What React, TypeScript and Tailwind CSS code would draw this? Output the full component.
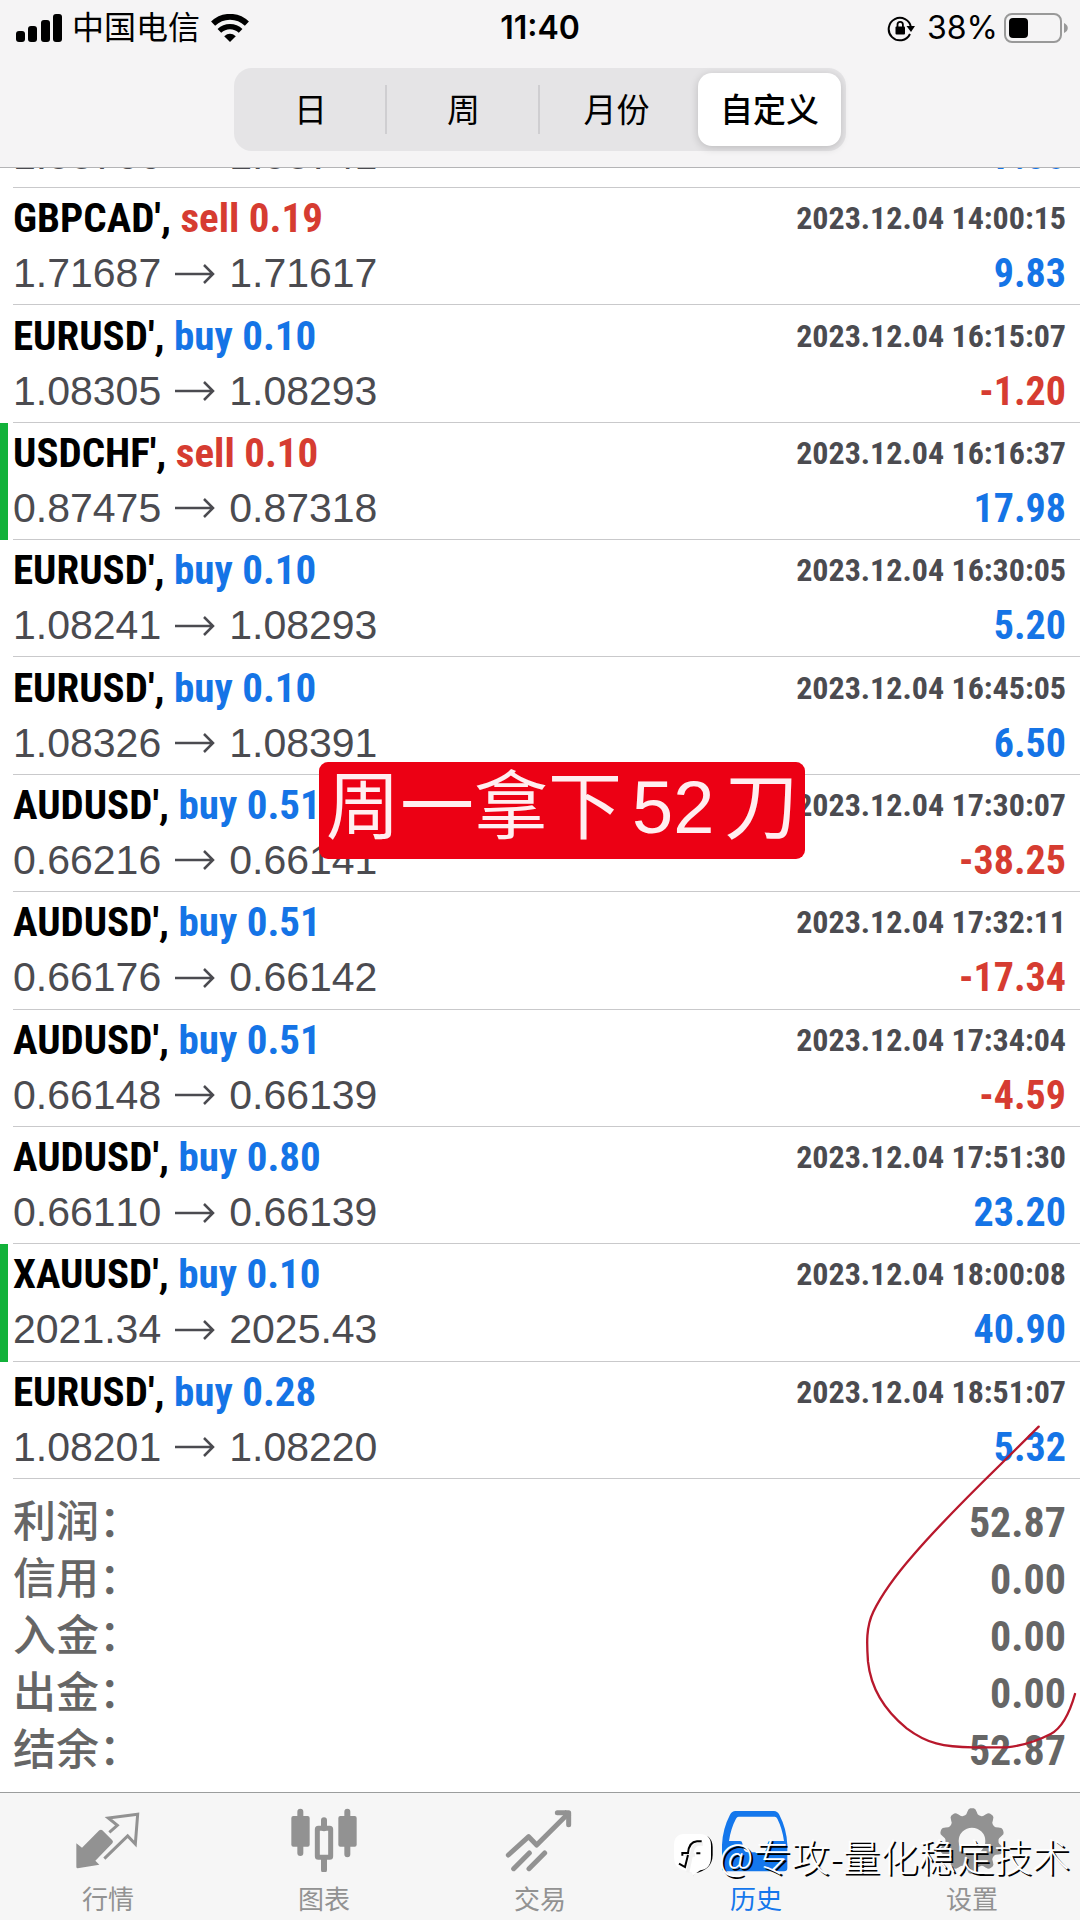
import { useState } from 'react';
import type { ReactNode } from 'react';

type Deal = {
  symbol: string;
  side: 'buy' | 'sell';
  volume: string;
  open: string;
  close: string;
  time: string;
  profit: string;
  marked?: boolean;
};

const DEALS: Deal[] = [
  { symbol: 'GBPCAD', side: 'sell', volume: '0.19', open: '1.71687', close: '1.71617', time: '2023.12.04 14:00:15', profit: '9.83' },
  { symbol: 'EURUSD', side: 'buy', volume: '0.10', open: '1.08305', close: '1.08293', time: '2023.12.04 16:15:07', profit: '-1.20' },
  { symbol: 'USDCHF', side: 'sell', volume: '0.10', open: '0.87475', close: '0.87318', time: '2023.12.04 16:16:37', profit: '17.98', marked: true },
  { symbol: 'EURUSD', side: 'buy', volume: '0.10', open: '1.08241', close: '1.08293', time: '2023.12.04 16:30:05', profit: '5.20' },
  { symbol: 'EURUSD', side: 'buy', volume: '0.10', open: '1.08326', close: '1.08391', time: '2023.12.04 16:45:05', profit: '6.50' },
  { symbol: 'AUDUSD', side: 'buy', volume: '0.51', open: '0.66216', close: '0.66141', time: '2023.12.04 17:30:07', profit: '-38.25' },
  { symbol: 'AUDUSD', side: 'buy', volume: '0.51', open: '0.66176', close: '0.66142', time: '2023.12.04 17:32:11', profit: '-17.34' },
  { symbol: 'AUDUSD', side: 'buy', volume: '0.51', open: '0.66148', close: '0.66139', time: '2023.12.04 17:34:04', profit: '-4.59' },
  { symbol: 'AUDUSD', side: 'buy', volume: '0.80', open: '0.66110', close: '0.66139', time: '2023.12.04 17:51:30', profit: '23.20' },
  { symbol: 'XAUUSD', side: 'buy', volume: '0.10', open: '2021.34', close: '2025.43', time: '2023.12.04 18:00:08', profit: '40.90', marked: true },
  { symbol: 'EURUSD', side: 'buy', volume: '0.28', open: '1.08201', close: '1.08220', time: '2023.12.04 18:51:07', profit: '5.32' },
];

const TOTALS = [
  ['利润', '52.87'],
  ['信用', '0.00'],
  ['入金', '0.00'],
  ['出金', '0.00'],
  ['结余', '52.87'],
];

const PERIODS = ['日', '周', '月份', '自定义'];

// ---------------------------------------------------------------------------
// Status bar icons
// ---------------------------------------------------------------------------

function SignalIcon() {
  return (
    <svg className="h-7 w-[46px]" viewBox="0 0 46 28" fill="currentColor" aria-hidden>
      <rect x="0" y="17" width="9" height="11" rx="3" />
      <rect x="12" y="12" width="9" height="16" rx="3" />
      <rect x="25" y="6" width="9" height="22" rx="3" />
      <rect x="37" y="0" width="9" height="28" rx="3" />
    </svg>
  );
}

function WifiIcon() {
  return (
    <svg className="h-7 w-10" viewBox="0 0 40 29" fill="none" stroke="currentColor" aria-hidden>
      <path d="M2.5 10a25 25 0 0 1 35 0" strokeWidth="6" />
      <path d="M9 17.500a16 16 0 0 1 22 0" strokeWidth="5.5" />
      <path d="M20 29l-6-6q6-5 12 0z" fill="currentColor" stroke="none" />
    </svg>
  );
}

function RotationLockIcon() {
  return (
    <svg className="h-7 w-7" viewBox="0 0 28 28" fill="none" stroke="currentColor" strokeWidth="2" aria-hidden>
      <path d="M23 20a11.200 11.200 0 1 1 1-6.500" />
      <path d="M19.500 12h8.500l-4 6z" fill="currentColor" stroke="none" />
      <rect x="8.500" y="12.500" width="9.500" height="8" rx="1" fill="currentColor" stroke="none" />
      <path d="M10.500 13v-2.500a2.700 2.700 0 0 1 5.400 0V13" strokeWidth="1.800" />
    </svg>
  );
}

function BatteryIcon() {
  return (
    <svg className="h-[30px] w-16" viewBox="0 0 64 30" fill="none" aria-hidden>
      <rect x="1" y="1" width="56" height="28" rx="7" stroke="#999" strokeWidth="2" />
      <rect x="5" y="5" width="19" height="20" rx="4" fill="#000" />
      <path d="M60 10c5 2 5 8 0 10z" fill="#999" />
    </svg>
  );
}

// ---------------------------------------------------------------------------
// Tab bar icons
// ---------------------------------------------------------------------------

function QuotesIcon() {
  return (
    <svg className="h-16 w-18" viewBox="216 84 216 192" fill="none" aria-hidden>
      <path
        d="M229 190l17 13 52-52q5-4 9 0l30 30q4 5 0 9l-51 52 12 12-65 11q-4 0-4-5z"
        fill="currentColor"
      />
      <path d="M328 157l24-21-27-22 88-11-7 89-23-24-70 68" stroke="currentColor" strokeWidth="9" />
    </svg>
  );
}

function ChartIcon() {
  return (
    <svg className="h-16 w-18" viewBox="864 84 216 192" fill="none" stroke="currentColor" aria-hidden>
      <path d="M901 95v124M1042 95v128M972 121v24M972 235v34" strokeWidth="18" strokeLinecap="round" />
      <rect x="874" y="108" width="55" height="92" rx="6" fill="currentColor" stroke="none" />
      <rect x="1015" y="108" width="55" height="92" rx="6" fill="currentColor" stroke="none" />
      <rect x="952" y="145" width="40" height="87" rx="3" strokeWidth="15" />
    </svg>
  );
}

function TradeIcon() {
  return (
    <svg
      className="h-16 w-18"
      viewBox="312 84 216 192"
      fill="none"
      stroke="currentColor"
      strokeWidth="15"
      strokeLinecap="round"
      strokeLinejoin="round"
      aria-hidden
    >
      <path d="M325 225l61-55 24 25 94-94" />
      <path d="M472 98h34v36M497 98l9 9" />
      <path d="M341 266l47-47M387 266l47-47" />
    </svg>
  );
}

function HistoryIcon() {
  return (
    <svg className="h-16 w-18" viewBox="180 84 216 192" fill="currentColor" aria-hidden>
      <path
        fillRule="evenodd"
        d="M226 93h116q10 0 16 11 22 42 24 90v70q0 10-10 10H196q-10 0-10-10v-70q2-48 24-90 6-11 16-11zM236 110q-5 0-8 6-16 30-21 67h33q6 0 7 7 2 27 16 27h44q14 0 16-27 1-7 7-7h42q-5-37-20-67-3-6-8-6z"
        clipRule="evenodd"
      />
    </svg>
  );
}

// Ten soft teeth around a round hole
const GEAR = Array.from({ length: 120 }, (_, i) => {
  const a = (i / 120) * Math.PI * 2;
  const r = 89 + 10 * Math.tanh(1.8 * Math.cos(a * 10));
  return `${(936 + r * Math.sin(a)).toFixed(1)},${(183 - r * Math.cos(a)).toFixed(1)}`;
}).join('L');

function SettingsIcon() {
  return (
    <svg className="h-16 w-18 overflow-visible" viewBox="828 84 216 192" fill="currentColor" aria-hidden>
      <path fillRule="evenodd" d={`M${GEAR}ZM976 183a40 40 0 1 0-80 0a40 40 0 1 0 80 0z`} />
    </svg>
  );
}

const TABS: { label: string; icon: ReactNode }[] = [
  { label: '行情', icon: <QuotesIcon /> },
  { label: '图表', icon: <ChartIcon /> },
  { label: '交易', icon: <TradeIcon /> },
  { label: '历史', icon: <HistoryIcon /> },
  { label: '设置', icon: <SettingsIcon /> },
];

// ---------------------------------------------------------------------------
// Deals
// ---------------------------------------------------------------------------

function Prices({ open, close }: { open: string; close: string }) {
  return (
    <span className="flex items-center gap-3.5 text-[41px] text-[#4b4b50] [font-kerning:none]">
      {open}
      <svg className="h-6 w-10" viewBox="0 0 40 24" fill="none" stroke="currentColor" strokeWidth="2.500" aria-label="→">
        <path d="M0 12h38M29 3l9 9-9 9" />
      </svg>
      {close}
    </span>
  );
}

function DealRow({ deal }: { deal: Deal }) {
  const isLoss = deal.profit.startsWith('-');

  return (
    <li className="flex flex-1">
      <span className={deal.marked ? 'w-2 bg-[#12b23a]' : 'w-2'} />
      <div className="ml-[5px] flex flex-1 flex-col justify-center border-b border-[#c9c9cb] pr-3.5 leading-[55px]">
        <div className="flex items-center justify-between font-['Roboto_Condensed','Liberation_Sans',sans-serif] font-bold">
          <span className="text-[41px] text-black">
            {deal.symbol}',{' '}
            <span className={deal.side === 'buy' ? 'text-[#1574e6]' : 'text-[#d63c31]'}>
              {deal.side} {deal.volume}
            </span>
          </span>
          <time className="text-[32px] text-[#4b4b50]">{deal.time}</time>
        </div>
        <div className="flex items-center justify-between">
          <Prices open={deal.open} close={deal.close} />
          <span
            className={[
              "font-['Roboto_Condensed','Liberation_Sans',sans-serif] text-[40px] font-bold",
              isLoss ? 'text-[#d63c31]' : 'text-[#1574e6]',
            ].join(' ')}
          >
            {deal.profit}
          </span>
        </div>
      </div>
    </li>
  );
}

// ---------------------------------------------------------------------------
// Page
// ---------------------------------------------------------------------------

export default function App() {
  const [period, setPeriod] = useState('自定义');
  const [tab, setTab] = useState('历史');

  return (
    <div className="relative flex min-h-screen flex-col overflow-hidden bg-white font-['Liberation_Sans','Noto_Sans_CJK_SC',sans-serif] text-black">
      <header className="border-b border-[#b4b4b6] bg-[#f5f4f5]">
        <div className="grid h-[54px] grid-cols-3 items-center px-3 pt-0.5 font-['Inter','Noto_Sans_CJK_SC',sans-serif] text-[32px]">
          <div className="flex items-center gap-2.5 pl-1">
            <SignalIcon />
            <span>中国电信</span>
            <WifiIcon />
          </div>
          <span className="text-center font-semibold">11:40</span>
          <div className="flex items-center justify-end">
            <RotationLockIcon />
            <span className="mr-1.5 ml-3">38%</span>
            <BatteryIcon />
          </div>
        </div>

        <div className="mx-auto mt-3.5 mb-4 grid h-[83px] w-[612px] max-w-full grid-cols-4 rounded-[18px] bg-[#e5e4e6]">
          {PERIODS.map((p, i) => (
            <button
              key={p}
              type="button"
              aria-pressed={p === period}
              onClick={() => setPeriod(p)}
              className={[
                'relative pt-0.5 text-[33px]',
                p === period ? 'm-[5px] rounded-[14px] bg-white font-medium shadow-[0_2px_8px_rgba(0,0,0,0.18)]' : '',
              ].join(' ')}
            >
              {p}
              {i < 2 && <span className="absolute top-[17px] right-0 bottom-[17px] w-0.5 bg-[#cfced1]" />}
            </button>
          ))}
        </div>
      </header>

      <main className="flex flex-1 flex-col">
        {/* Tail of the deal scrolled under the header */}
        <div className="ml-[13px] flex h-5 items-end justify-between overflow-hidden border-b border-[#c9c9cb] pr-3.5 pb-1 leading-[55px]">
          <Prices open="1.08766" close="1.08741" />
          <span className="font-['Roboto_Condensed','Liberation_Sans',sans-serif] text-[40px] font-bold text-[#1574e6]">
            7.80
          </span>
        </div>

        <ul className="flex flex-1 flex-col">
          {DEALS.map((d) => (
            <DealRow key={d.time} deal={d} />
          ))}
        </ul>

        <dl className="pt-[15px] pr-3.5 pb-[13px] pl-[13px] leading-[57px] text-[#666]">
          {TOTALS.map(([label, value]) => (
            <div key={label} className="flex justify-between">
              <dt className="text-[43px] font-medium">{label}：</dt>
              <dd className="font-['Roboto_Condensed','Liberation_Sans',sans-serif] text-[42px] font-bold">{value}</dd>
            </div>
          ))}
        </dl>
      </main>

      <nav className="grid grid-cols-5 border-t border-[#9b9d9d] bg-[#f6f6f6]">
        {TABS.map(({ label, icon }) => (
          <button
            key={label}
            type="button"
            onClick={() => setTab(label)}
            className={[
              'flex flex-col items-center gap-3 pt-[15px] pb-1 text-[26px] leading-8',
              label === tab ? 'text-[#1477ec]' : 'text-[#929292]',
            ].join(' ')}
          >
            {icon}
            {label}
          </button>
        ))}
      </nav>

      {/* Caption sticker */}
      <div className="absolute top-[762px] left-[319px] flex h-[97px] items-center gap-2.5 rounded-[9px] bg-[#ec0014] px-[7px] pb-1.5 text-[74px] leading-none text-[#ffeef0]">
        <span>周一拿下</span>
        <span>52</span>
        <span>刀</span>
      </div>

      {/* Hand-drawn loop around the totals */}
      <svg
        className="pointer-events-none absolute right-0 bottom-[140px] h-[380px] w-[300px]"
        viewBox="0 0 900 1140"
        fill="none"
        stroke="#b8182c"
        strokeWidth="7"
        strokeLinecap="round"
        aria-hidden
      >
        <path d="M776 80L660 195C570 283 480 372 400 465C345 528 308 578 280 635C258 680 260 730 264 785C272 860 312 930 380 985C440 1030 490 1042 580 1042H680C740 1036 785 1016 812 1002C850 982 870 935 885 882" />
      </svg>

      {/* Watermark */}
      <div className="pointer-events-none absolute right-2.5 bottom-[38px] flex items-center gap-0.5 font-['Noto_Sans_CJK_SC',sans-serif] text-[38px] leading-[54px] font-light text-white [text-shadow:2px_2px_0_#000]">
        <svg className="mr-1 h-11 w-10" viewBox="0 0 120 132" fill="none" aria-hidden>
          <path d="M60 131L64 121Q118 112 119 66V42Q118 20 104 10L90 60Z" fill="#000" />
          <path d="M34 3H80Q114 3 114 38V72Q114 108 82 112L60 127 56 118 34 112Q3 106 3 74V38Q3 3 34 3z" fill="#fff" />
          <path d="M90 33H76Q60 36 56 62L44 118M36 66H66" stroke="#f1f1f1" strokeWidth="10" />
          <path d="M86 25H72Q48 27 45 60H28V68M45 66L36 102 18 92M70 61H82" stroke="#000" strokeWidth="6" />
        </svg>
        <span>@专攻-量化稳定技术</span>
      </div>
    </div>
  );
}
